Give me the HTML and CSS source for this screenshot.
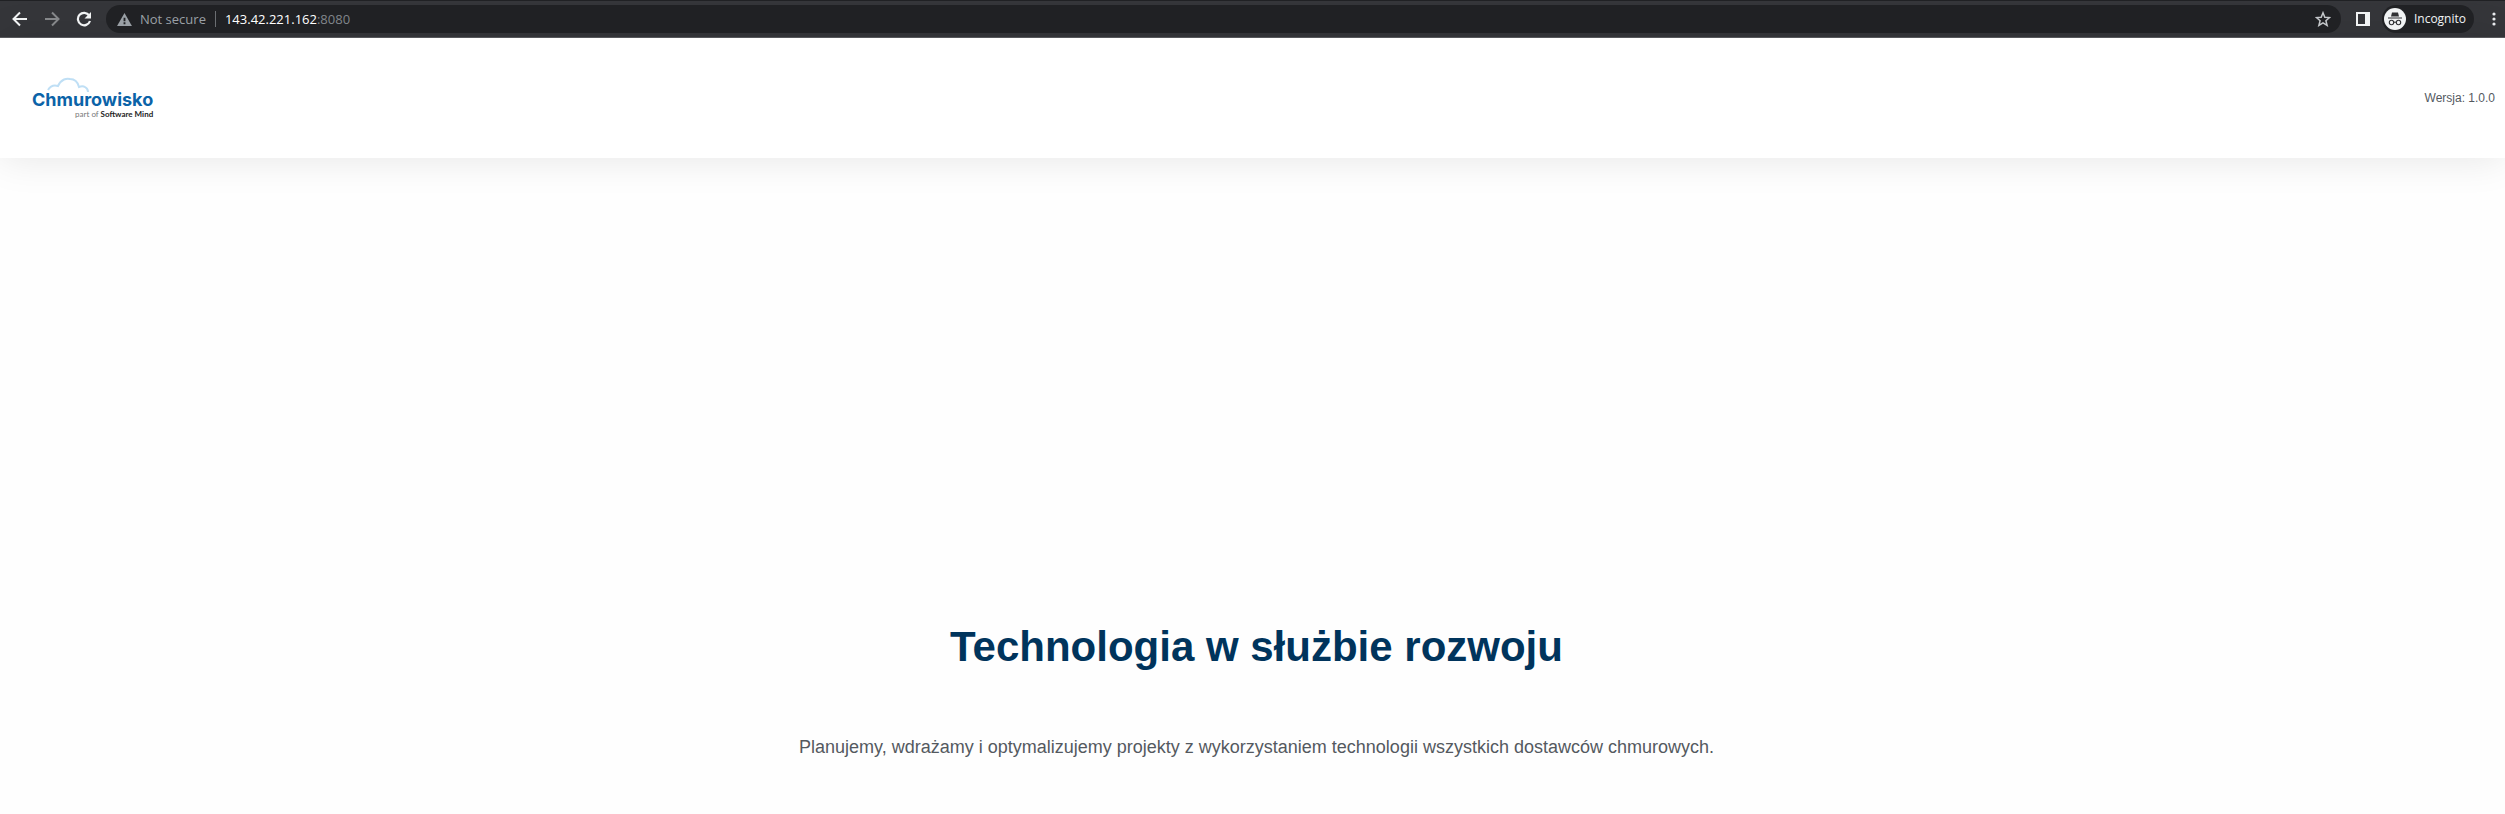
FILE: index.html
```html
<!DOCTYPE html>
<html lang="pl">
<head>
<meta charset="utf-8">
<meta name="viewport" content="width=device-width, initial-scale=1">
<title>Chmurowisko</title>
<link rel="stylesheet" href="styles.css">
</head>
<body>
<div class="toolbar" lang="en">
  <button class="tool" aria-label="Back"><svg viewBox="0 0 16 16"><path d="M15 8H2M8 1.500 1.500 8 8 14.500" fill="none" stroke="#f1f3f4" stroke-width="2"/></svg></button>
  <button class="tool" aria-label="Forward"><svg viewBox="0 0 16 16"><path d="M1 8h13M8 1.500 14.500 8 8 14.500" fill="none" stroke="#85878a" stroke-width="2"/></svg></button>
  <button class="tool" aria-label="Reload"><svg viewBox="0 0 16 16"><path d="M13.200 4.500A6.200 6.200 0 1 0 14 10" fill="none" stroke="#f1f3f4" stroke-width="2.200"/><path d="M15 1v6.500H8.500z" fill="#f1f3f4"/></svg></button>
  <div class="address">
    <svg class="warn" viewBox="0 0 16 14"><path d="M8 0l8 14H0z" fill="#9aa0a6"/><path d="M7 5h2v4H7zM7 10h2v2H7z" fill="#202124"/></svg>
    <span class="insecure">Not secure</span>
    <span class="divider"></span>
    <span class="url"><span class="host">143.42.221.162</span>:8080</span>
    <button class="star" aria-label="Bookmark this page"><svg viewBox="0 0 16 16"><path d="M8 1.800l1.800 4.500 4.700.3-3.600 3.100 1.200 4.700L8 11.800l-4.100 2.600 1.200-4.700-3.600-3.100 4.700-.3z" fill="none" stroke="#c4c7ca" stroke-width="1.500"/></svg></button>
  </div>
  <button class="panel" aria-label="Side panel"><svg viewBox="0 0 14 14"><path d="M0 0h14v14H0zM2 2v10h7V2z" fill="#f1f3f4" fill-rule="evenodd"/></svg></button>
  <button class="profile">
    <svg viewBox="0 0 22 22"><circle cx="11" cy="11" r="11" fill="#f1f3f4"/><path d="M7 8.500 8 4.500h6l1 4zM4 9.500h14v1H4z" fill="#303134"/><g fill="none" stroke="#303134" stroke-width="1.100"><circle cx="7.500" cy="14.500" r="2.200"/><circle cx="14.500" cy="14.500" r="2.200"/><path d="M9.700 14.200h2.600"/></g></svg>
    <span>Incognito</span>
  </button>
  <button class="more" aria-label="Menu"><svg viewBox="0 0 4 14"><g fill="#e8eaed"><circle cx="2" cy="2" r="1.600"/><circle cx="2" cy="7" r="1.600"/><circle cx="2" cy="12" r="1.600"/></g></svg></button>
</div>
<header class="header">
  <a class="logo" href="#" aria-label="Chmurowisko, part of Software Mind">
    <svg class="cloud" viewBox="0 0 42 17"><path d="M1 13C4 8 8 8 11 9 14 2 20 1 23 2 29 2 31 6 32 10 37 8 41 11 41 15" fill="none" stroke="#bfdff5" stroke-width="2"/></svg>
    <span class="brand">Chmurowisko</span>
    <span class="tagline">part of <b>Software Mind</b></span>
  </a>
  <span class="version">Wersja: 1.0.0</span>
</header>
<main class="hero">
  <h1 class="title">Technologia w służbie rozwoju</h1>
  <p class="lead">Planujemy, wdrażamy i optymalizujemy projekty z wykorzystaniem technologii wszystkich dostawców chmurowych.</p>
</main>
</body>
</html>
```
FILE: styles.css
```css
* { box-sizing: border-box; }
body {
  margin: 0;
  background: #fefefe;
  font-family: "Liberation Sans", Arial, sans-serif;
}
svg { display: block; }
button {
  border: 0;
  padding: 0;
  background: none;
  font: inherit;
}
.toolbar {
  display: flex;
  align-items: center;
  height: 38px;
  padding: 0 9px 0 12px;
  background: #35363a;
  border-top: 1px solid #202124;
  border-bottom: 1px solid #5b5c60;
  font-family: "Open Sans", "Noto Sans", sans-serif;
  font-size: 13px;
  line-height: 20px;
}
.tool { width: 16px; margin-right: 16px; }
.tool svg { width: 16px; height: 16px; }
.address {
  display: flex;
  flex: 1;
  align-items: center;
  height: 28px;
  margin-left: -2px;
  padding: 0 10px 0 11px;
  border-radius: 14px;
  background: #202124;
  color: #9aa0a6;
}
.warn { width: 15px; height: 13px; margin-right: 8px; }
.divider { width: 1px; height: 16px; margin: 0 9px; background: #6b6e72; }
.url { color: #80868b; }
.host { color: #fff; }
.star { margin-left: auto; }
.star svg { width: 16px; height: 16px; }
.panel { margin: 0 12px 0 15px; }
.panel svg { width: 14px; height: 14px; }
.profile {
  display: flex;
  align-items: center;
  gap: 8px;
  height: 28px;
  padding: 0 8px 0 2px;
  border-radius: 14px;
  background: #202124;
  color: #f1f3f4;
  font-size: 12px;
}
.profile svg { width: 22px; height: 22px; }
.more { margin-left: 18px; }
.more svg { width: 4px; height: 14px; }
.header {
  display: flex;
  align-items: center;
  justify-content: space-between;
  height: 120px;
  padding: 0 10px 0 32px;
  background: #fff;
  box-shadow: 0 0 40px rgba(0, 0, 0, 0.1);
}
.logo {
  display: flex;
  flex-direction: column;
  color: #0b63a8;
  text-decoration: none;
}
.cloud { width: 42px; height: 17px; margin-left: 15px; }
.brand {
  margin-top: -4px;
  font-family: Inter, sans-serif;
  font-size: 18px;
  font-weight: 700;
  line-height: 20px;
}
.tagline {
  align-self: flex-end;
  color: #777;
  font-family: Lato, sans-serif;
  font-size: 8px;
  line-height: 8px;
  padding-bottom: 2px;
}
.tagline b { color: #222; }
.version { color: #54595f; font-size: 12px; }
.hero { padding: 464px 20px 50px 28px; text-align: center; }
.title {
  margin: 0;
  color: #00345c;
  font-size: 42px;
  line-height: 50px;
}
.lead {
  margin: 61px 0 0;
  color: #54595f;
  font-size: 18px;
  line-height: 28px;
}
```
